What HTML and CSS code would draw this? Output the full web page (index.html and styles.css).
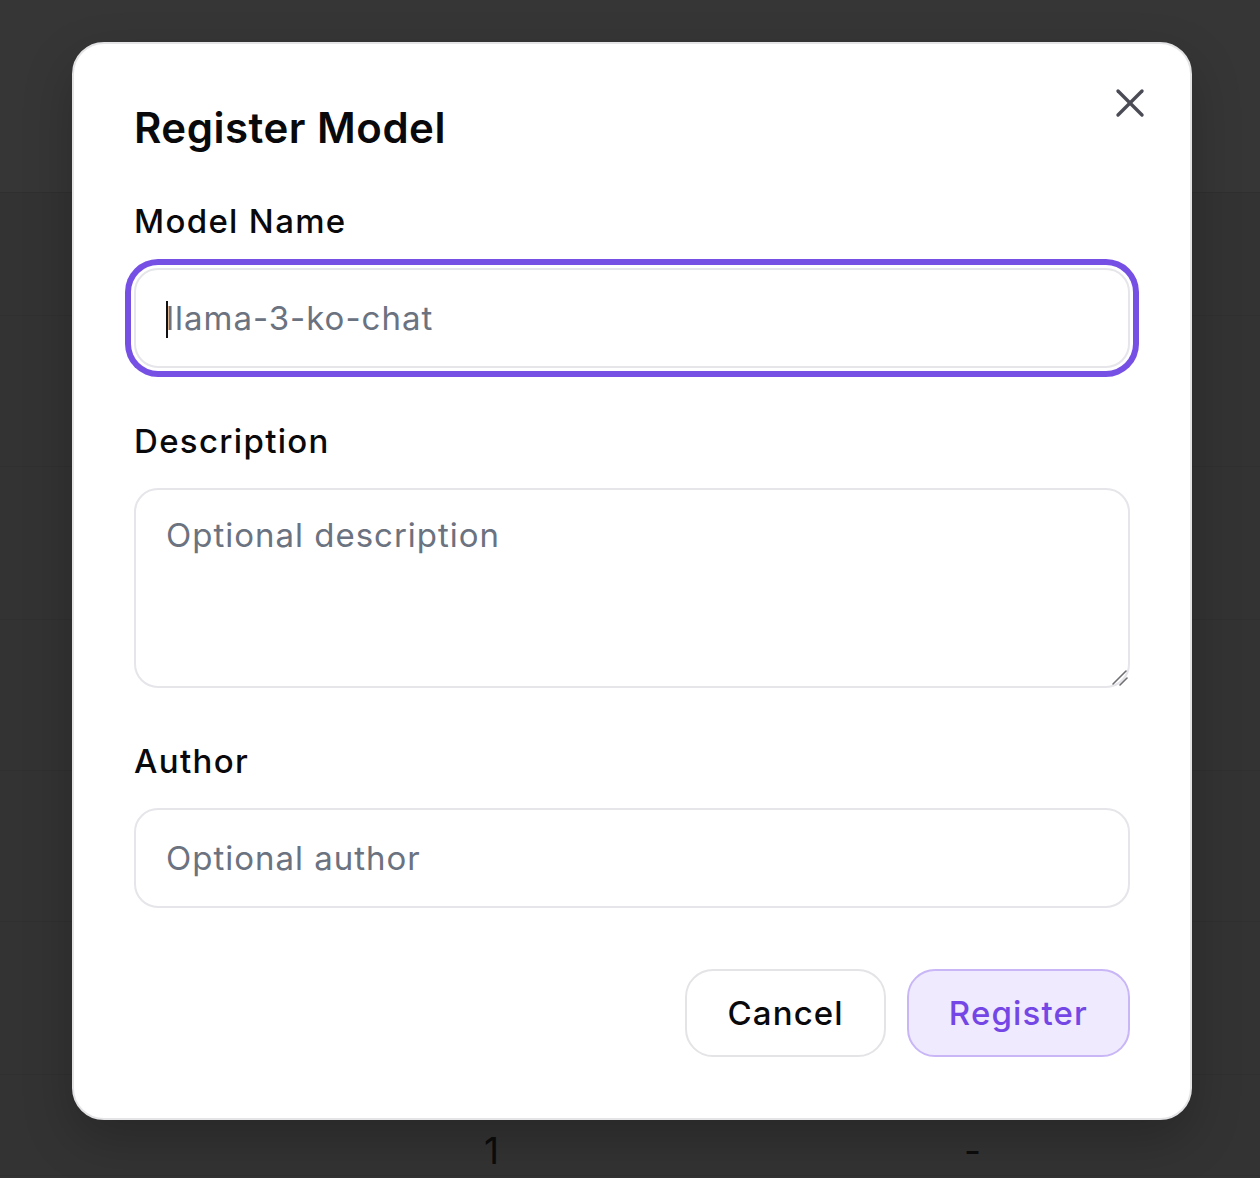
FILE: index.html
```html
<!DOCTYPE html>
<html lang="en">
<head>
<meta charset="utf-8">
<title>Register Model</title>
<link rel="stylesheet" href="styles.css">
</head>
<body>
<div class="page">
  <div class="page-header"></div>
  <div class="row row-a"></div>
  <div class="row row-b"></div>
  <div class="row row-c"></div>
  <div class="row row-b"></div>
  <div class="row row-b"></div>
  <div class="row row-c"></div>
  <div class="row row-last">
    <span class="cell-num">1</span>
    <span class="cell-dash">-</span>
  </div>
</div>

<div class="modal" role="dialog" aria-labelledby="modal-title">
  <button class="close-btn" type="button" aria-label="Close">
    <svg width="48" height="48" viewBox="0 0 24 24" fill="none" stroke="currentColor" stroke-width="1.7" stroke-linecap="round" stroke-linejoin="round"><path d="M18 6 6 18"/><path d="m6 6 12 12"/></svg>
  </button>
  <h2 class="modal-title" id="modal-title">Register Model</h2>

  <div class="field">
    <label class="field-label" for="model-name">Model Name</label>
    <div class="input-wrap">
      <input class="input input-focused" id="model-name" type="text" placeholder="llama-3-ko-chat">
      <span class="caret"></span>
    </div>
  </div>

  <div class="field">
    <label class="field-label" for="description">Description</label>
    <div class="input-wrap">
      <textarea class="input textarea" id="description" placeholder="Optional description"></textarea>
      <svg class="grabber" width="18" height="18" viewBox="0 0 18 18" fill="none" stroke="#6e6e73" stroke-width="1.6" stroke-linecap="round"><path d="M15 2 2 15"/><path d="M16 9 9 16"/></svg>
    </div>
  </div>

  <div class="field">
    <label class="field-label" for="author">Author</label>
    <input class="input" id="author" type="text" placeholder="Optional author">
  </div>

  <div class="actions">
    <button class="btn btn-cancel" type="button">Cancel</button>
    <button class="btn btn-primary" type="button">Register</button>
  </div>
</div>
</body>
</html>
```

FILE: styles.css
```css
* {
  box-sizing: border-box;
}

html, body {
  margin: 0;
  padding: 0;
}

body {
  width: 1260px;
  height: 1178px;
  overflow: hidden;
  background: #333333;
  font-family: Inter, "Noto Sans", "Liberation Sans", sans-serif;
  position: relative;
}

/* dimmed page behind the dialog */
.page {
  display: flex;
  flex-direction: column;
}

.page-header {
  height: 193px;
  background: #363636;
  border-bottom: 1px solid #2f2f2f;
}

.row {
  border-bottom: 1px solid #303030;
}

.row-a { height: 123px; }
.row-b { height: 151px; }
.row-c { height: 153px; }

.row-last {
  display: grid;
  grid-template-columns: 484px 480px 1fr;
  padding-top: 52px;
  font-size: 37px;
  line-height: 48px;
  color: #0c0c0c;
}

.cell-num {
  grid-column: 2;
}

.cell-dash {
  grid-column: 3;
}

/* dialog */
.modal {
  position: absolute;
  left: 72px;
  top: 42px;
  width: 1120px;
  background: #ffffff;
  border: 2px solid #e4e4e7;
  border-radius: 32px;
  padding: 56px 60px 61px;
  box-shadow: 0 20px 50px rgba(0, 0, 0, 0.22);
  color: #09090b;
}

.close-btn {
  position: absolute;
  top: 35px;
  right: 36px;
  width: 48px;
  height: 48px;
  padding: 0;
  border: 0;
  background: transparent;
  color: #4b4b55;
  display: flex;
  align-items: center;
  justify-content: center;
  cursor: pointer;
}

.modal-title {
  margin: 0 0 41px;
  font-size: 42px;
  line-height: 56px;
  font-weight: 600;
  letter-spacing: 0.012em;
}

.field + .field {
  margin-top: 49px;
}

.field-label {
  display: block;
  font-size: 33px;
  line-height: 48px;
  font-weight: 500;
  letter-spacing: 0.04em;
  margin-bottom: 23px;
}

.input-wrap {
  position: relative;
}

.input {
  display: block;
  width: 100%;
  height: 100px;
  border: 2px solid #e5e5ea;
  border-radius: 24px;
  padding: 0 30px;
  font-family: inherit;
  font-size: 33px;
  line-height: 48px;
  letter-spacing: 0.03em;
  color: #09090b;
  background: #ffffff;
  outline: none;
}

.input::placeholder {
  color: #6b7280;
  opacity: 1;
}

.input-focused {
  border-color: #e5e5ea;
  box-shadow: 0 0 0 3px #ffffff, 0 0 0 9px #7650e4;
}

.caret {
  position: absolute;
  left: 32px;
  top: 33px;
  width: 2px;
  height: 37px;
  background: #111111;
}

.textarea {
  height: 200px;
  padding: 21px 30px;
  resize: none;
}

.grabber {
  position: absolute;
  right: 1px;
  bottom: 1px;
}

.actions {
  margin-top: 61px;
  display: flex;
  justify-content: flex-end;
  gap: 21px;
}

.btn {
  height: 88px;
  padding: 0 40px;
  border-radius: 28px;
  font-family: inherit;
  font-size: 33px;
  font-weight: 500;
  line-height: 48px;
  letter-spacing: 0.035em;
  cursor: pointer;
}

.btn-cancel {
  background: #ffffff;
  border: 2px solid #e4e4e7;
  color: #09090b;
}

.btn-primary {
  background: #efeafd;
  border: 2px solid #c8b6f7;
  color: #7446e6;
}
```
